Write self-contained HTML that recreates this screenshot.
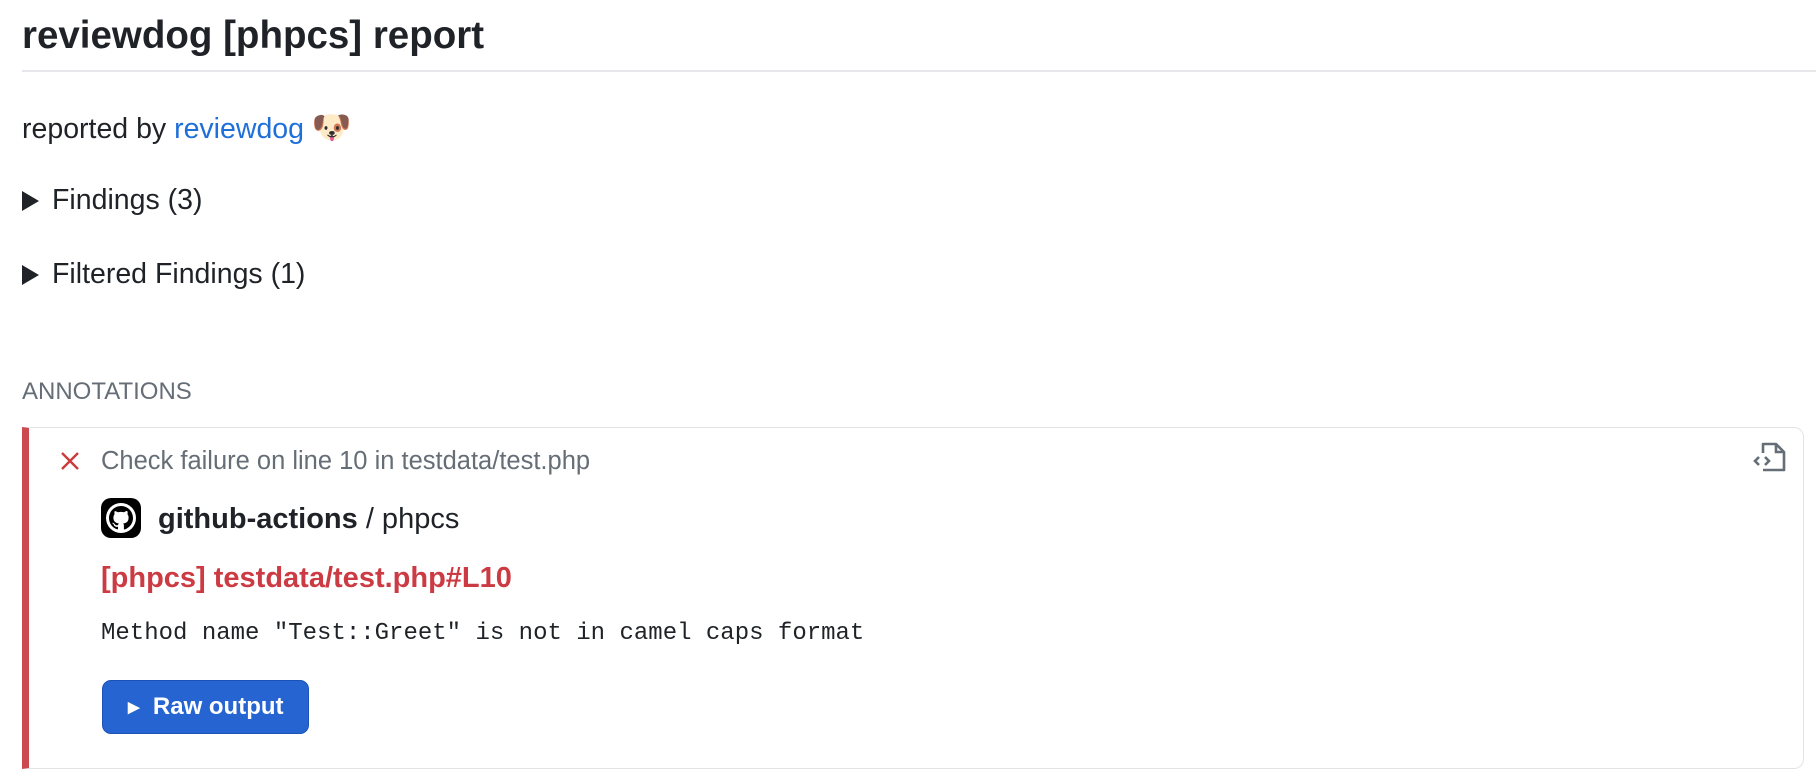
<!DOCTYPE html>
<html><head><meta charset="utf-8"><style>
body{margin:0;background:#fff;font-family:"Liberation Sans",sans-serif;color:#1f2328;width:1816px;height:778px;overflow:hidden;position:relative}
.a{position:absolute;white-space:nowrap}
</style></head><body>
<div class="a" style="left:22px;top:12px;font-size:38.5px;font-weight:bold;line-height:48px">reviewdog [phpcs] report</div>
<div class="a" style="left:22px;top:70px;width:1794px;height:2px;background:#e5e7eb"></div>
<div class="a" style="left:22px;top:110px;font-size:28.5px;line-height:34px">reported by <span style="color:#1f6fd9">reviewdog</span> <span style="font-family:'DejaVu Sans',sans-serif;font-size:32px">🐶</span></div>
<svg class="a" style="left:22px;top:191px" width="18" height="20" viewBox="0 0 18 20"><path d="M0 0L17 10L0 20Z" fill="#1f2328"/></svg>
<div class="a" style="left:52px;top:183px;font-size:28.5px;line-height:34px">Findings (3)</div>
<svg class="a" style="left:22px;top:265px" width="18" height="20" viewBox="0 0 18 20"><path d="M0 0L17 10L0 20Z" fill="#1f2328"/></svg>
<div class="a" style="left:52px;top:257px;font-size:28.5px;line-height:34px">Filtered Findings (1)</div>
<div class="a" style="left:22px;top:377px;font-size:24px;line-height:30px;color:#656d76">ANNOTATIONS</div>
<div class="a" style="left:22px;top:427px;width:1774px;height:340px;border:1px solid #e1e3e6;border-left:7px solid #cc4a4f;border-radius:0 10px 10px 0"></div>
<svg class="a" style="left:60px;top:451px" width="20" height="20" viewBox="0 0 20 20"><path d="M2 2L18 18M18 2L2 18" stroke="#cc3b3b" stroke-width="2.4"/></svg>
<div class="a" style="left:101px;top:446px;font-size:25.5px;line-height:30px;color:#656d76">Check failure on line 10 in testdata/test.php</div>
<svg class="a" style="left:1752px;top:441px" width="36" height="32" viewBox="0 0 36 32"><path d="M11 12V3h13l8 8v18H11" fill="none" stroke="#656d76" stroke-width="2.6" stroke-linejoin="round"/><path d="M24 3v8h8" fill="none" stroke="#656d76" stroke-width="2.6"/><path d="M7 16l-4 4 4 4M13 16l4 4-4 4" fill="none" stroke="#656d76" stroke-width="2.6"/></svg>
<svg class="a" style="left:101px;top:498px" width="40" height="40" viewBox="0 0 40 40"><rect width="40" height="40" rx="10" fill="#000"/><circle cx="20" cy="20" r="15" fill="#fff"/><path d="M20 8c-6.6 0-12 5.4-12 12 0 5.3 3.4 9.8 8.2 11.4.6.1.8-.3.8-.6v-2.1c-3.3.7-4-1.4-4-1.4-.5-1.4-1.3-1.8-1.3-1.8-1.1-.7.1-.7.1-.7 1.2.1 1.8 1.2 1.8 1.2 1.1 1.8 2.8 1.3 3.5 1 .1-.8.4-1.3.8-1.6-2.7-.3-5.5-1.3-5.5-5.9 0-1.3.5-2.4 1.2-3.2-.1-.3-.5-1.5.1-3.2 0 0 1-.3 3.3 1.2a11.5 11.5 0 0 1 6 0c2.3-1.6 3.3-1.2 3.3-1.2.7 1.7.2 2.9.1 3.2.8.8 1.2 1.9 1.2 3.2 0 4.6-2.8 5.6-5.5 5.9.4.4.8 1.1.8 2.2v3.3c0 .3.2.7.8.6C28.6 29.8 32 25.3 32 20c0-6.6-5.4-12-12-12z" fill="#000"/></svg>
<div class="a" style="left:158px;top:501px;font-size:29px;line-height:36px"><b>github-actions</b> / phpcs</div>
<div class="a" style="left:101px;top:560px;font-size:29px;line-height:36px;font-weight:bold;color:#cc3b43">[phpcs] testdata/test.php#L10</div>
<div class="a" style="left:101px;top:619px;font-family:'Liberation Mono',monospace;font-size:24px;line-height:30px">Method name "Test::Greet" is not in camel caps format</div>
<div class="a" style="left:102px;top:680px;width:207px;height:54px;background:#2665d1;border:1px solid #1b52b5;border-radius:9px;color:#fff;font-size:24px;font-weight:bold;line-height:52px;box-sizing:border-box;padding-left:25px"><span style="font-size:15px;position:relative;top:-2px">▶</span>&nbsp; Raw output</div>
</body></html>
